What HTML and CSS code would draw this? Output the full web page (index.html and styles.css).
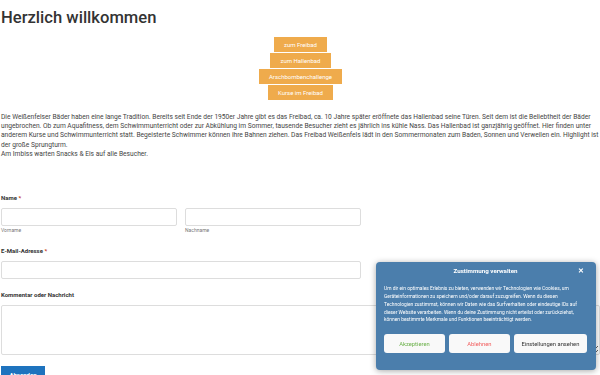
FILE: index.html
```html
<!DOCTYPE html>
<html>
<head>
    <title>Herzlich willkommen</title>
    <link rel="stylesheet" href="styles.css">
</head>
<body>
    <div class="page">
        <h1 class="title">Herzlich willkommen</h1>

        <div class="link-buttons">
            <a class="link-button" href="#">zum Freibad</a>
            <a class="link-button" href="#">zum Hallenbad</a>
            <a class="link-button" href="#">Arschbombenchallenge</a>
            <a class="link-button" href="#">Kurse im Freibad</a>
        </div>

        <p class="intro">Die Weißenfelser Bäder haben eine lange Tradition. Bereits seit Ende der 1950er Jahre gibt es das Freibad, ca. 10 Jahre später eröffnete das Hallenbad seine Türen. Seit dem ist die Beliebtheit der Bäder ungebrochen. Ob zum Aquafitness, dem Schwimmunterricht oder zur Abkühlung im Sommer, tausende Besucher zieht es jährlich ins kühle Nass. Das Hallenbad ist ganzjährig geöffnet. Hier finden unter anderem Kurse und Schwimmunterricht statt. Begeisterte Schwimmer können ihre Bahnen ziehen. Das Freibad Weißenfels lädt in den Sommermonaten zum Baden, Sonnen und Verweilen ein. Highlight ist der große Sprungturm.<br>Am Imbiss warten Snacks &amp; Eis auf alle Besucher.</p>

        <form class="contact-form">
            <div class="field">
                <label class="field-label">Name <span class="required">*</span></label>
                <div class="name-row">
                    <div class="name-part">
                        <input type="text" class="input">
                        <span class="sub-label">Vorname</span>
                    </div>
                    <div class="name-part">
                        <input type="text" class="input">
                        <span class="sub-label">Nachname</span>
                    </div>
                </div>
            </div>

            <div class="field">
                <label class="field-label">E-Mail-Adresse <span class="required">*</span></label>
                <input type="email" class="input input-email">
            </div>

            <div class="field">
                <label class="field-label">Kommentar oder Nachricht</label>
                <textarea class="input input-message"></textarea>
            </div>

            <button type="button" class="submit">Absenden</button>
        </form>
    </div>

    <div class="cookie-box">
        <div class="cookie-head">
            <span class="cookie-title">Zustimmung verwalten</span>
            <span class="cookie-close">&#x2715;</span>
        </div>
        <p class="cookie-text">Um dir ein optimales Erlebnis zu bieten, verwenden wir Technologien wie Cookies, um Geräteinformationen zu speichern und/oder darauf zuzugreifen. Wenn du diesen Technologien zustimmst, können wir Daten wie das Surfverhalten oder eindeutige IDs auf dieser Website verarbeiten. Wenn du deine Zustimmung nicht erteilst oder zurückziehst, können bestimmte Merkmale und Funktionen beeinträchtigt werden.</p>
        <div class="cookie-buttons">
            <button class="cookie-btn accept">Akzeptieren</button>
            <button class="cookie-btn deny">Ablehnen</button>
            <button class="cookie-btn settings">Einstellungen ansehen</button>
        </div>
    </div>
</body>
</html>
```

FILE: styles.css
```css
body {
    font-family: Roboto, "Liberation Sans", sans-serif;
    margin: 0;
    padding: 0;
    color: #444;
    background: #fff;
    overflow: hidden;
}

.page {
    padding: 0 0 0 1px;
}

.title {
    margin: 0;
    padding-top: 7px;
    font-size: 16.6px;
    line-height: 22px;
    font-weight: 500;
    color: #333;
}

.link-buttons {
    display: flex;
    flex-direction: column;
    align-items: center;
    gap: 1px;
    margin-top: 8px;
}

.link-button {
    display: block;
    background-color: #efab4c;
    color: #fff;
    text-decoration: none;
    font-size: 6px;
    line-height: 15px;
    padding: 0 10px;
}

.intro {
    margin: 13px 0 0;
    font-size: 6.65px;
    line-height: 9.2px;
    color: #444;
}

.contact-form {
    margin-top: 34px;
}

.field {
    margin-bottom: 11px;
}

.field-label {
    display: block;
    font-size: 6px;
    line-height: 9px;
    font-weight: bold;
    color: #333;
    margin-bottom: 6px;
}

.required {
    color: #c02b0a;
}

.name-row {
    display: flex;
    gap: 8px;
    width: 360px;
}

.name-part {
    flex: 1;
}

.input {
    display: block;
    box-sizing: border-box;
    width: 100%;
    height: 18px;
    border: 1px solid #ddd;
    border-radius: 2px;
    background: #fff;
    margin: 0;
    padding: 0;
}

.input-email {
    width: 360px;
}

.input-message {
    height: 50px;
    resize: vertical;
}

.sub-label {
    display: block;
    font-size: 5px;
    line-height: 9px;
    color: #777;
}

.submit {
    display: block;
    margin-top: 0;
    background-color: #1e73be;
    color: #fff;
    border: none;
    font-family: Roboto, "Liberation Sans", sans-serif;
    font-size: 6px;
    font-weight: bold;
    width: 44px;
    height: 16px;
    padding: 0;
}

.cookie-box {
    position: fixed;
    right: 4px;
    bottom: 5px;
    width: 220px;
    box-sizing: border-box;
    padding: 4px 9px 17px 8px;
    background-color: #4b7eac;
    border-radius: 4px;
    box-shadow: 0 1px 6px rgba(0, 0, 0, 0.35);
    color: #fff;
}

.cookie-head {
    display: flex;
    justify-content: center;
    align-items: center;
    position: relative;
    height: 10px;
}

.cookie-title {
    font-size: 6.2px;
    font-weight: bold;
}

.cookie-close {
    position: absolute;
    right: 3px;
    top: 0;
    font-size: 7px;
    font-weight: bold;
    line-height: 10px;
}

.cookie-text {
    margin: 9px 0 0;
    font-size: 4.9px;
    line-height: 7.7px;
}

.cookie-buttons {
    display: flex;
    gap: 4px;
    margin-top: 10px;
}

.cookie-btn {
    flex: 1 1 0;
    height: 19px;
    border: none;
    border-radius: 3px;
    background-color: #f9f9f9;
    font-family: Roboto, "Liberation Sans", sans-serif;
    font-size: 5.8px;
    padding: 0;
}

.cookie-btn.settings {
    flex-grow: 1.2;
    color: #333;
}

.cookie-btn.accept {
    color: #6bb14a;
}

.cookie-btn.deny {
    color: #f25e5e;
}
```
